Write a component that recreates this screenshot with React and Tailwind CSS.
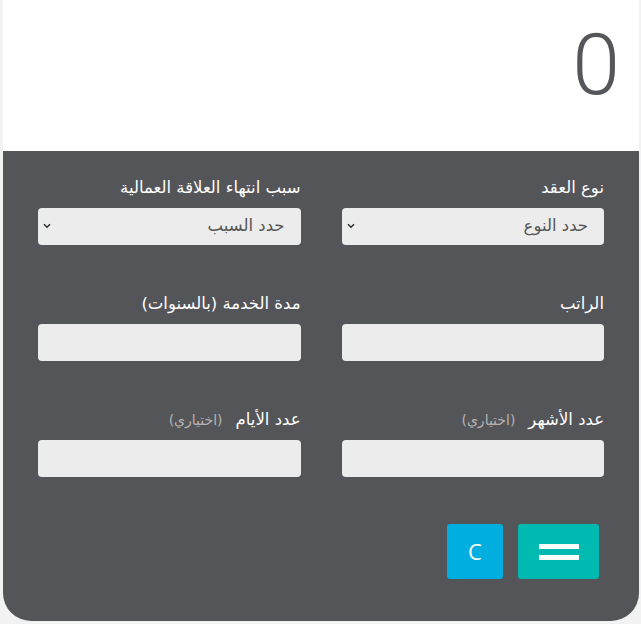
import React from "react";

const Label = ({ text, optional }) => (
  <div className="flex items-center h-[24px] mb-[8px] gap-[13px]">
    <span className="text-[16.5px] text-white">{text}</span>
    {optional && <span className="text-[14px] text-[#b4b4b4]">(اختياري)</span>}
  </div>
);

const SelectBox = ({ placeholder }) => (
  <div className="relative h-[37px] bg-[#ececec] rounded-[4px]">
    <select className="appearance-none w-full h-full bg-transparent pr-[16px] pl-[30px] text-[16.5px] text-[#555] outline-none">
      <option>{placeholder}</option>
    </select>
    <svg className="absolute left-[5px] top-[15px] pointer-events-none" width="8" height="6" viewBox="0 0 8 6">
      <path d="M1 1.2 L4 4.2 L7 1.2" fill="none" stroke="#333" strokeWidth="1.6" />
    </svg>
  </div>
);

const Input = () => (
  <input className="block w-full h-[37px] bg-[#ececec] rounded-[4px] outline-none px-[12px]" />
);

export default function App() {
  return (
    <div
      className="w-[641px] h-[624px] bg-[#f2f2f2] pl-[3px] pr-[2px]"
      style={{ fontFamily: '"DejaVu Sans", "Open Sans", sans-serif' }}
      dir="rtl"
    >
      <div className="rounded-b-[28px] overflow-hidden">
        <div className="h-[151px] bg-white flex items-start justify-start pr-[19px]">
          <span
            className="block text-[86px] leading-normal font-light text-[#55565a]"
            style={{ fontFamily: 'Roboto, "Open Sans", sans-serif' }}
          >
            0
          </span>
        </div>
        <div className="bg-[#545559] pt-[25px] pb-[42px] px-[35px]">
          <div className="grid grid-cols-2 gap-x-[41px] gap-y-[47px]">
            <div>
              <Label text="نوع العقد" />
              <SelectBox placeholder="حدد النوع" />
            </div>
            <div>
              <Label text="سبب انتهاء العلاقة العمالية" />
              <SelectBox placeholder="حدد السبب" />
            </div>
            <div>
              <Label text="الراتب" />
              <Input />
            </div>
            <div>
              <Label text="مدة الخدمة (بالسنوات)" />
              <Input />
            </div>
            <div>
              <Label text="عدد الأشهر" optional />
              <Input />
            </div>
            <div>
              <Label text="عدد الأيام" optional />
              <Input />
            </div>
          </div>
          <div className="flex gap-[15px] mt-[47px] pr-[5px]">
            <button className="w-[81px] h-[55px] bg-[#00b9b0] rounded-[3px] flex flex-col items-center justify-center gap-[6px]">
              <span className="block w-[40px] h-[5px] bg-white"></span>
              <span className="block w-[40px] h-[5px] bg-white"></span>
            </button>
            <button
              className="w-[56px] h-[55px] bg-[#00afe0] rounded-[3px] text-white text-[22px]"
              style={{ fontFamily: '"Open Sans", sans-serif' }}
            >
              C
            </button>
          </div>
        </div>
      </div>
    </div>
  );
}
